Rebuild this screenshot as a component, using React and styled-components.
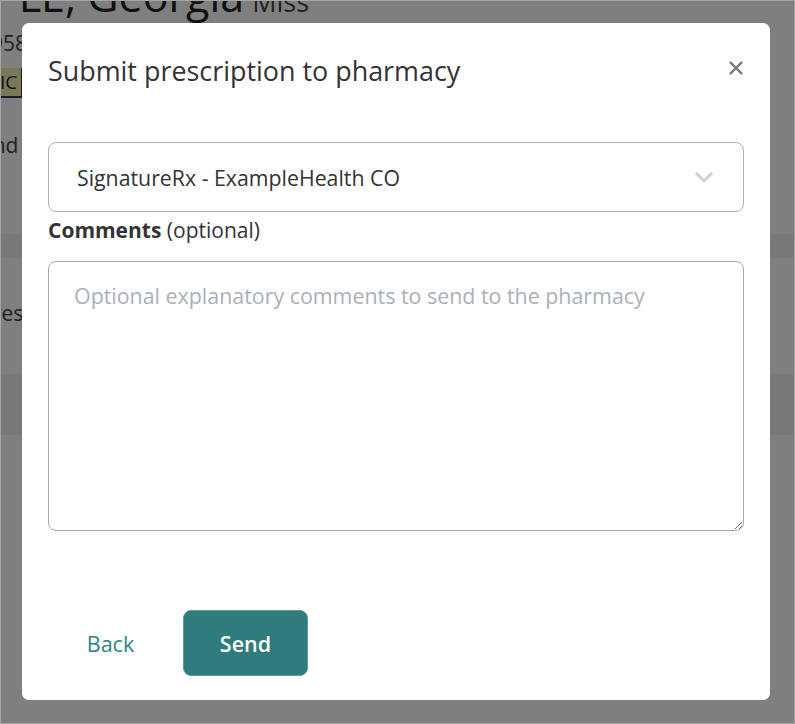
import React from "react";
import styled, { createGlobalStyle } from "styled-components";

const FONT = `"Open Sans", "Noto Sans", sans-serif`;

const Global = createGlobalStyle`
  html, body { margin: 0; padding: 0; }
  body {
    width: 795px; height: 724px; overflow: hidden; box-sizing: border-box;
    border: 1px solid #a6a6a6;
    font-family: ${FONT};
    background: #fff;
  }
  * { box-sizing: border-box; }
`;

const Page = styled.div`
  position: relative;
  width: 793px;
  height: 722px;
  overflow: hidden;
  background: #fff;
`;

const PageContent = styled.div`
  margin-top: -30px;
  display: flex;
  flex-direction: column;
  color: #222;
`;

const PatientName = styled.div`
  font-size: 43px;
  line-height: 50px;
  margin-left: -58px;
  white-space: nowrap;
  & small { font-size: 27px; color: #444; margin-left: 8px; }
`;

const Meta = styled.div`
  font-size: 21px;
  line-height: 28px;
  margin-left: -22px;
  margin-top: 2px;
  color: #444;
`;

const Badge = styled.div`
  margin-top: 11px;
  margin-left: -20px;
  width: 42px;
  height: 30px;
  background: #f4f1b2;
  border-right: 2px solid #2c3a5a;
  border-bottom: 2px solid #2c3a5a;
  font-size: 19px;
  line-height: 28px;
  padding-left: 19px;
  color: #222;
  overflow: hidden;
`;

const SideWord = styled.div`
  font-size: 21px;
  line-height: 28px;
  margin-left: ${p => p.$ml}px;
  margin-top: ${p => p.$mt}px;
  color: #444;
`;

const Band = styled.div`
  height: ${p => p.$h}px;
  margin-top: ${p => p.$mt}px;
  background: #f2f2f2;
  border-bottom: 1px solid #fff;
`;

const Overlay = styled.div`
  position: absolute;
  inset: 0;
  background: rgba(0, 0, 0, 0.5);
  display: flex;
  align-items: flex-start;
  justify-content: flex-start;
  padding: 22px 0 0 21px;
`;

const Modal = styled.div`
  width: 748px;
  height: 677px;
  background: #fff;
  border-radius: 7px;
  display: flex;
  flex-direction: column;
  padding: 0 26px 24px;
`;

const Header = styled.div`
  display: flex;
  justify-content: space-between;
  align-items: flex-start;
  padding-top: 31px;
`;

const Title = styled.h2`
  margin: 0;
  font-weight: 400;
  font-size: 26.9px;
  line-height: 34px;
  color: #333;
`;

const Close = styled.button`
  border: 0;
  background: none;
  padding: 0;
  margin: 4px -2px 0 0;
  width: 20px;
  height: 20px;
  display: flex;
  align-items: center;
  justify-content: center;
  cursor: pointer;
`;

const Select = styled.div`
  margin-top: 54px;
  height: 70px;
  border: 1px solid #b0b0b0;
  border-radius: 8px;
  display: flex;
  align-items: center;
  justify-content: space-between;
  padding: 0 30px 0 28px;
  font-size: 21.3px;
  color: #333;
`;

const Label = styled.label`
  margin-top: 5px;
  font-size: 21px;
  line-height: 26px;
  color: #333;
  & b { font-weight: 700; }
`;

const TextArea = styled.textarea`
  margin-top: 18px;
  height: 270px;
  width: 100%;
  border: 1px solid #a8a8a8;
  border-radius: 8px;
  padding: 20px 25px;
  font-family: ${FONT};
  font-size: 21.4px;
  line-height: 28px;
  color: #333;
  outline: none;
  &::placeholder { color: #aab0b9; }
`;

const Footer = styled.div`
  margin-top: auto;
  display: flex;
  gap: 10px;
`;

const Button = styled.button`
  height: 66px;
  min-width: 125px;
  border-radius: 8px;
  font-family: ${FONT};
  font-size: 21.5px;
  padding: 0 24px;
  cursor: pointer;
  border: 1px solid ${p => (p.$primary ? "#5a9c9c" : "transparent")};
  background: ${p => (p.$primary ? "#307b7b" : "transparent")};
  color: ${p => (p.$primary ? "#fff" : "#2e8585")};
  font-weight: ${p => (p.$primary ? 600 : 400)};
`;

export default function App() {
  return (
    <>
      <Global />
      <Page>
        <PageContent>
          <PatientName>EPPLE, Georgia<small>Miss</small></PatientName>
          <Meta>1958</Meta>
          <Badge>IC</Badge>
          <SideWord $ml={-20} $mt={33}>and</SideWord>
          <Band $h={25} $mt={75} />
          <SideWord $ml={-10} $mt={40}>yes</SideWord>
          <Band $h={62} $mt={47} />
        </PageContent>
        <Overlay>
          <Modal role="dialog">
            <Header>
              <Title>Submit prescription to pharmacy</Title>
              <Close aria-label="Close">
                <svg width="14" height="14" viewBox="0 0 14 14">
                  <path d="M1.5 1.5 L12.5 12.5 M12.5 1.5 L1.5 12.5" stroke="#777" strokeWidth="2.4" strokeLinecap="round" />
                </svg>
              </Close>
            </Header>
            <Select>
              <span>SignatureRx - ExampleHealth CO</span>
              <svg width="18" height="11" viewBox="0 0 18 11">
                <path d="M1.5 1.5 L9 9 L16.5 1.5" stroke="#cfcfcf" strokeWidth="2.6" fill="none" strokeLinecap="round" strokeLinejoin="round" />
              </svg>
            </Select>
            <Label><b>Comments</b> (optional)</Label>
            <TextArea placeholder="Optional explanatory comments to send to the pharmacy" />
            <Footer>
              <Button>Back</Button>
              <Button $primary>Send</Button>
            </Footer>
          </Modal>
        </Overlay>
      </Page>
    </>
  );
}
